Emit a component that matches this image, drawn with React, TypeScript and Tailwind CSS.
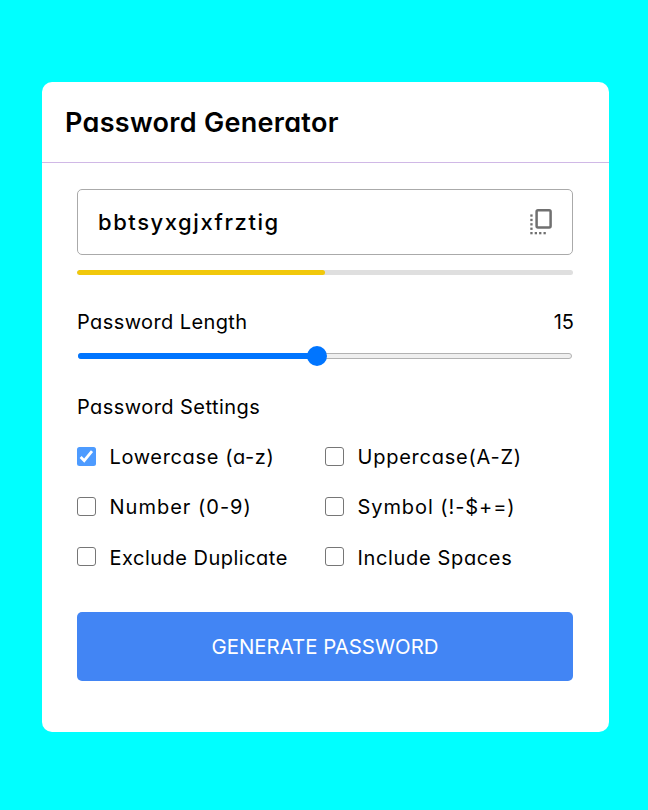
type Setting = { label: string; checked?: boolean; tracking: string };

const settings: Setting[] = [
  { label: "Lowercase (a-z)", checked: true, tracking: "tracking-[0.64px]" },
  { label: "Uppercase(A-Z)", tracking: "tracking-[0.77px]" },
  { label: "Number (0-9)", tracking: "tracking-[1px]" },
  { label: "Symbol (!-$+=)", tracking: "tracking-[0.92px]" },
  { label: "Exclude Duplicate", tracking: "tracking-[0.49px]" },
  { label: "Include Spaces", tracking: "tracking-[0.65px]" },
];

function CopyIcon() {
  return (
    <svg className="mb-[2px]" width="24" height="28" viewBox="0 0 24 28" fill="none" aria-hidden="true">
      <rect x="7.6" y="3.3" width="14" height="17.2" rx="1.4" stroke="#707070" strokeWidth="2.5" />
      <g fill="#707070">
        <rect x="1.3" y="7.4" width="2.3" height="2.3" />
        <rect x="1.3" y="11.8" width="2.3" height="2.3" />
        <rect x="1.3" y="16.2" width="2.3" height="2.3" />
        <rect x="1.3" y="20.6" width="2.3" height="2.3" />
        <rect x="1.3" y="25" width="2.3" height="2.3" />
        <rect x="5.7" y="25" width="2.3" height="2.3" />
        <rect x="10.1" y="25" width="2.3" height="2.3" />
        <rect x="14.5" y="25" width="2.3" height="2.3" />
      </g>
    </svg>
  );
}

function Checkbox({ checked }: { checked?: boolean }) {
  if (checked) {
    return (
      <span className="mb-[1.6px] flex size-[19px] shrink-0 items-center justify-center rounded-[2.5px] bg-[#4d9bff]">
        <svg width="19" height="19" viewBox="0 0 19 19" fill="none" aria-hidden="true">
          <path d="M3.6 10.1 L7.2 13.6 L15 4.2" stroke="white" strokeWidth="2.8" />
        </svg>
      </span>
    );
  }
  return <span className="mb-[1.6px] size-[19px] shrink-0 rounded-[3px] border-[1.5px] border-[#767676] bg-white" />;
}

export default function App() {
  return (
    <div className="flex h-[810px] w-[648px] flex-col bg-[#00ffff] pt-[82px] pl-[42px] font-['Inter',sans-serif] text-black [font-feature-settings:'cv11']">
      <div className="h-[650px] w-[567px] rounded-[10px] bg-white">
        <h2 className="flex h-[81px] items-center border-b border-[#d0b8e6] pt-[2px] pl-[23px] text-[27px] font-semibold tracking-[0.3px]">
          Password Generator
        </h2>
        <div className="flex flex-col pt-[26px] pr-[36px] pl-[35px]">
          <div className="flex h-[66px] items-center justify-between rounded-[5px] border border-[#aaa] pr-[19px] pl-[20px]">
            <span className="text-[22px] font-medium tracking-[1.55px]">bbtsyxgjxfrztig</span>
            <CopyIcon />
          </div>
          <div className="mt-[15px] h-[5px] overflow-hidden rounded-[2.5px] bg-[#dfdfdf]">
            <div className="h-full w-1/2 rounded-[2.5px] bg-[#f1c80b]" />
          </div>
          <div className="mt-[32px] flex h-[30px] items-center justify-between text-[20px]">
            <span className="tracking-[0.4px]">Password Length</span>
            <span className="-mr-[0.5px] tracking-[-0.3px]">15</span>
          </div>
          <div className="relative mx-[1px] mt-[16px] h-[6px] rounded-[3px] border border-[#b2b2b2] bg-[#efefef]">
            <div className="-mt-px -ml-px h-[6px] w-[239px] rounded-[3px] bg-[#0075ff]" />
            <div className="absolute -top-[8px] left-[228px] size-[19.5px] rounded-full bg-[#0075ff]" />
          </div>
          <div className="mt-[33px] flex h-[30px] items-center text-[20px] tracking-[0.44px]">Password Settings</div>
          <div className="mt-[20px] grid grid-cols-2 gap-y-[20.3px] text-[20px]">
            {settings.map((s) => (
              <label key={s.label} className="flex h-[30px] items-center gap-[13.5px]">
                <Checkbox checked={s.checked} />
                <span className={`whitespace-nowrap ${s.tracking}`}>{s.label}</span>
              </label>
            ))}
          </div>
          <button className="mt-[39.4px] h-[69px] rounded-[5px] bg-[#4285f4] pt-[2px] text-[20.4px] text-white">
            GENERATE PASSWORD
          </button>
        </div>
      </div>
    </div>
  );
}
